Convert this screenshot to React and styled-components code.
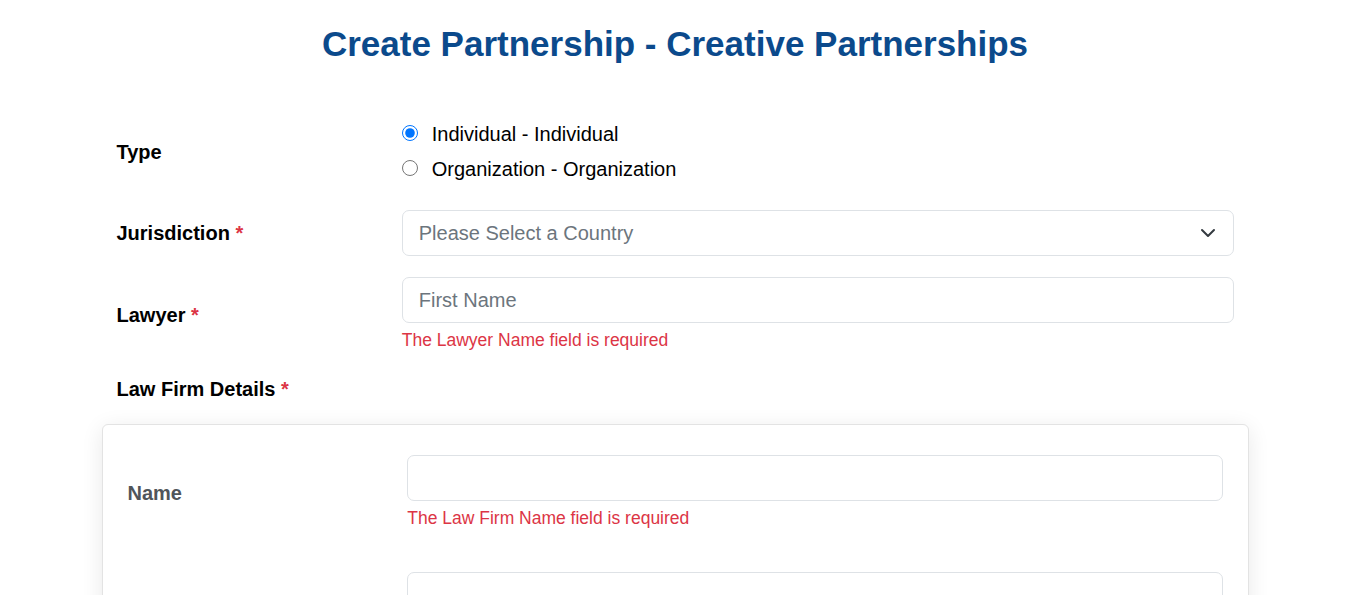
import styled, { createGlobalStyle } from "styled-components";

const GlobalStyle = createGlobalStyle`
    html, body {
        margin: 0;
        background: #fff;
        font-family: "Liberation Sans", Arial, sans-serif;
        color: #212529;
    }
    body {
        padding-right: 7px;
    }
    * {
        box-sizing: border-box;
    }
`

const Chevron = () => (
    <ChevronIcon viewBox="0 0 16 16" width="16" height="16">
        <path d="M2 5l6 6 6-6" fill="none" stroke="#343a40" strokeWidth="2" strokeLinecap="round" strokeLinejoin="round" />
    </ChevronIcon>
)

const Field = ({ label, required, children, muted, space }) => (
    <FormRow space={space}>
        <LabelCol>
            {label && (
                <Label muted={muted}>
                    {label}
                    {required && <Star> *</Star>}
                </Label>
            )}
        </LabelCol>
        <InputCol>{children}</InputCol>
    </FormRow>
)

const App = () => {
    return (
        <>
            <GlobalStyle />
            <Container>
                <Title>Create Partnership - Creative Partnerships</Title>

                <Field label="Type" space={26}>
                    <RadioGroup>
                        <RadioOption>
                            <Radio type="radio" name="type" defaultChecked />
                            Individual - Individual
                        </RadioOption>
                        <RadioOption>
                            <Radio type="radio" name="type" />
                            Organization - Organization
                        </RadioOption>
                    </RadioGroup>
                </Field>

                <Field label="Jurisdiction" required>
                    <SelectWrap>
                        <Select defaultValue="">
                            <option value="">Please Select a Country</option>
                        </Select>
                        <Chevron />
                    </SelectWrap>
                </Field>

                <Field label="Lawyer" required>
                    <Input placeholder="First Name" />
                    <Feedback>The Lawyer Name field is required</Feedback>
                </Field>

                <SectionLabel>
                    Law Firm Details<Star> *</Star>
                </SectionLabel>

                <Card>
                    <Field label="Name" muted space={41}>
                        <Input />
                        <Feedback>The Law Firm Name field is required</Feedback>
                    </Field>
                    <Field muted>
                        <Input />
                    </Field>
                </Card>
            </Container>
        </>
    )
}

export default App;

const Container = styled.div`
    max-width: 1141px;
    margin: 0 auto;
    padding: 0 12px 40px;
`

const Title = styled.h1`
    margin: 23px 0 54px;
    text-align: center;
    font-size: 35px;
    line-height: 42px;
    font-weight: 700;
    color: #0b4a8c;
`

const FormRow = styled.div`
    display: flex;
    align-items: center;
    margin: 0 -12px ${p => p.space ?? 21}px;
    > * {
        padding: 0 12px;
    }
`

const LabelCol = styled.div`
    flex: 0 0 25%;
`

const InputCol = styled.div`
    flex: 1;
    min-width: 0;
`

const Label = styled.label`
    font-size: 20px;
    line-height: 30px;
    font-weight: 700;
    color: ${p => (p.muted ? "#50555a" : "#000")};
`

const Star = styled.span`
    color: #dc3545;
`

const SectionLabel = styled.div`
    font-size: 20px;
    line-height: 30px;
    font-weight: 700;
    color: #000;
    margin-bottom: 20px;
`

const RadioGroup = styled.div`
    display: flex;
    flex-direction: column;
    gap: 5px;
`

const RadioOption = styled.label`
    display: flex;
    align-items: center;
    gap: 14px;
    font-size: 20px;
    line-height: 30px;
    color: #000;
`

const Radio = styled.input`
    width: 16px;
    height: 16px;
    margin: 0 0 3px;
    accent-color: #0075ff;
`

const Input = styled.input`
    display: block;
    width: 100%;
    height: 46px;
    padding: 7px 16px;
    font-family: inherit;
    font-size: 20px;
    line-height: 30px;
    color: #212529;
    border: 1px solid #dee2e6;
    border-radius: 7px;
    outline: none;
    &::placeholder {
        color: #6c757d;
    }
`

const SelectWrap = styled.div`
    position: relative;
`

const Select = styled.select`
    display: block;
    width: 100%;
    height: 46px;
    padding: 7px 48px 7px 16px;
    font-family: inherit;
    font-size: 20px;
    line-height: 30px;
    color: #6c757d;
    background: #fff;
    border: 1px solid #dee2e6;
    border-radius: 7px;
    appearance: none;
    outline: none;
`

const ChevronIcon = styled.svg`
    position: absolute;
    right: 18px;
    top: 50%;
    transform: translateY(-50%);
    pointer-events: none;
`

const Feedback = styled.div`
    margin-top: 4px;
    font-size: 17.5px;
    line-height: 26px;
    color: #dc3545;
`

const Card = styled.div`
    margin: 0 -15px;
    padding: 30px 25px 10px;
    border: 1px solid #e3e3e3;
    border-radius: 6px;
    background: #fff;
    box-shadow: 0 4px 22px rgba(0, 0, 0, 0.09);
`
